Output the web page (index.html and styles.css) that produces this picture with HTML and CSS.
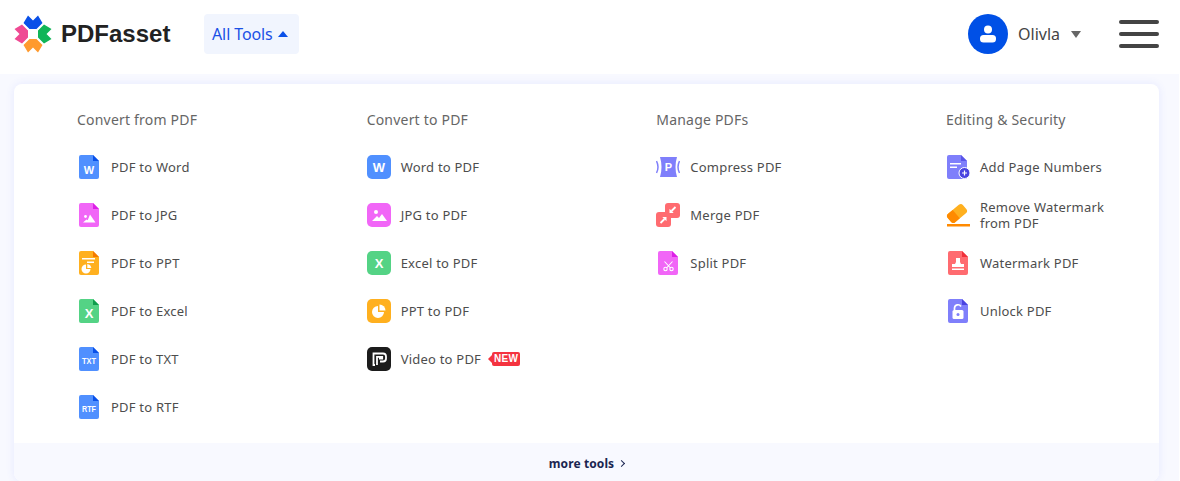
FILE: index.html
```html
<!DOCTYPE html>
<html>
<head>
    <meta charset="utf-8" />
    <title>PDFasset</title>
    <link rel="stylesheet" href="styles.css">
</head>
<body>
    <header class="top">
        <a class="logo">
            <svg width="38" height="38" viewBox="0 0 38 38">
                <polygon fill="#0a50e8" points="9.500,8 14,.5 19,5.500 24,.5 28.500,8 22.500,14 15.500,14"/>
                <polygon fill="#10b558" transform="rotate(90 19 19)" points="9.500,8 14,.5 19,5.500 24,.5 28.500,8 22.500,14 15.500,14"/>
                <polygon fill="#ff9a2e" transform="rotate(180 19 19)" points="9.500,8 14,.5 19,5.500 24,.5 28.500,8 22.500,14 15.500,14"/>
                <polygon fill="#ef4a93" transform="rotate(270 19 19)" points="9.500,8 14,.5 19,5.500 24,.5 28.500,8 22.500,14 15.500,14"/>
            </svg>
            <span>PDFasset</span>
        </a>
        <button class="all-tools">All Tools <i class="caret-up"></i></button>
        <div class="user">
            <span class="avatar">
                <svg width="20" height="20" viewBox="0 0 20 20" fill="#fff">
                    <circle cx="10" cy="5.500" r="4"/>
                    <rect x="2" y="11" width="16" height="7.500" rx="3.500"/>
                </svg>
            </span>
            <span class="name">Olivla</span>
            <i class="caret-down"></i>
        </div>
        <div class="burger"><i></i><i></i><i></i></div>
    </header>

    <main class="page">
        <section class="panel">
            <div class="cols">
                <div class="col">
                    <h3>Convert from PDF</h3>
                    <a class="tool">
                        <svg class="ico" width="24" height="24" viewBox="0 0 24 24"><path fill="#5090ff" d="M4 0h12l6 6v16a2 2 0 0 1-2 2H4a2 2 0 0 1-2-2V2a2 2 0 0 1 2-2z"/><path fill="#0a50e8" d="M16 0l6 6h-6z"/><text x="12" y="19" class="gl gl-m">W</text></svg>
                        PDF to Word
                    </a>
                    <a class="tool">
                        <svg class="ico" width="24" height="24" viewBox="0 0 24 24"><path fill="#f166f7" d="M4 0h12l6 6v16a2 2 0 0 1-2 2H4a2 2 0 0 1-2-2V2a2 2 0 0 1 2-2z"/><path fill="#dc1fe6" d="M16 0l6 6h-6z"/><circle cx="8.500" cy="13.500" r="1.400" fill="#fff"/><path fill="#fff" d="M6 19.500l3.500-3 1.200 .8L13 11.500l5.500 8z"/></svg>
                        PDF to JPG
                    </a>
                    <a class="tool">
                        <svg class="ico" width="24" height="24" viewBox="0 0 24 24"><path fill="#ffb01f" d="M4 0h12l6 6v16a2 2 0 0 1-2 2H4a2 2 0 0 1-2-2V2a2 2 0 0 1 2-2z"/><path fill="#f57a00" d="M16 0l6 6h-6z"/><rect x="5" y="7" width="13" height="1.500" fill="#fff"/><rect x="10" y="10.500" width="7" height="1.500" fill="#fff"/><path fill="#fff" d="M9 13.500v4.500h4.500a4.500 4.500 0 1 1-4.500-4.500z"/><path fill="#fff" d="M10.300 13a4.500 4.500 0 0 1 4 4h-4z"/></svg>
                        PDF to PPT
                    </a>
                    <a class="tool">
                        <svg class="ico" width="24" height="24" viewBox="0 0 24 24"><path fill="#54d385" d="M4 0h12l6 6v16a2 2 0 0 1-2 2H4a2 2 0 0 1-2-2V2a2 2 0 0 1 2-2z"/><path fill="#0f9d4c" d="M16 0l6 6h-6z"/><text x="12" y="19" class="gl gl-l">X</text></svg>
                        PDF to Excel
                    </a>
                    <a class="tool">
                        <svg class="ico" width="24" height="24" viewBox="0 0 24 24"><path fill="#5090ff" d="M4 0h12l6 6v16a2 2 0 0 1-2 2H4a2 2 0 0 1-2-2V2a2 2 0 0 1 2-2z"/><path fill="#0a50e8" d="M16 0l6 6h-6z"/><text x="12" y="17" class="gl gl-s" textLength="14" lengthAdjust="spacingAndGlyphs">TXT</text></svg>
                        PDF to TXT
                    </a>
                    <a class="tool">
                        <svg class="ico" width="24" height="24" viewBox="0 0 24 24"><path fill="#5090ff" d="M4 0h12l6 6v16a2 2 0 0 1-2 2H4a2 2 0 0 1-2-2V2a2 2 0 0 1 2-2z"/><path fill="#0a50e8" d="M16 0l6 6h-6z"/><text x="12" y="17" class="gl gl-s" textLength="14" lengthAdjust="spacingAndGlyphs">RTF</text></svg>
                        PDF to RTF
                    </a>
                </div>

                <div class="col">
                    <h3>Convert to PDF</h3>
                    <a class="tool">
                        <svg class="ico" width="24" height="24" viewBox="0 0 24 24"><rect width="24" height="24" rx="5" fill="#5090ff"/><text x="12" y="17" class="gl gl-l">W</text></svg>
                        Word to PDF
                    </a>
                    <a class="tool">
                        <svg class="ico" width="24" height="24" viewBox="0 0 24 24"><rect width="24" height="24" rx="5" fill="#f166f7"/><circle cx="9" cy="9" r="2" fill="#fff"/><path fill="#fff" d="M5 18l5-5 2 2 3-4 5 7z"/></svg>
                        JPG to PDF
                    </a>
                    <a class="tool">
                        <svg class="ico" width="24" height="24" viewBox="0 0 24 24"><rect width="24" height="24" rx="5" fill="#54d385"/><text x="12" y="17" class="gl gl-l">X</text></svg>
                        Excel to PDF
                    </a>
                    <a class="tool">
                        <svg class="ico" width="24" height="24" viewBox="0 0 24 24"><rect width="24" height="24" rx="5" fill="#ffb01f"/><path fill="#fff" d="M11 7v6h6a6 6 0 1 1-6-6z"/><path fill="#fff" d="M12.500 5.500a6 6 0 0 1 6 6h-6z"/></svg>
                        PPT to PDF
                    </a>
                    <a class="tool">
                        <svg class="ico" width="24" height="24" viewBox="0 0 24 24"><rect width="24" height="24" rx="5" fill="#1c1c1c"/><path fill="none" stroke="#fff" stroke-width="1.800" d="M8 18H6.500V6.500h9.500a3 3 0 0 1 3 3v2a3 3 0 0 1-3 3h-3"/><path fill="none" stroke="#fff" stroke-width="1.800" d="M10 18v-8.200h5.200v1.800H12"/></svg>
                        Video to PDF
                        <span class="new"><i></i><b>NEW</b></span>
                    </a>
                </div>

                <div class="col">
                    <h3>Manage PDFs</h3>
                    <a class="tool">
                        <svg class="ico" width="24" height="24" viewBox="0 0 24 24"><path fill="#7f7ffb" d="M4 2h17Q18 12 21 22H4Q7 12 4 2z"/><path fill="none" stroke="#7f7ffb" stroke-width="1.500" d="M.5 6Q3.500 12 .5 18M23.500 6Q20.500 12 23.500 18"/><text x="12.500" y="16" class="gl gl-m">P</text></svg>
                        Compress PDF
                    </a>
                    <a class="tool">
                        <svg class="ico" width="24" height="24" viewBox="0 0 24 24"><rect x="0" y="9" width="15" height="15" rx="3" fill="#ff6b70"/><rect x="9" y="0" width="15" height="15" rx="3" fill="#ff6b70"/><path fill="#fff" d="M10.500 14v4.200l-4.200-4.200zM13.500 10V5.800l4.200 4.200z"/><path stroke="#fff" stroke-width="1.800" d="M8.500 16L4.500 20M15.500 8L19.500 4"/></svg>
                        Merge PDF
                    </a>
                    <a class="tool">
                        <svg class="ico" width="24" height="24" viewBox="0 0 24 24"><path fill="#f166f7" d="M4 0h12l6 6v16a2 2 0 0 1-2 2H4a2 2 0 0 1-2-2V2a2 2 0 0 1 2-2z"/><path fill="#dc1fe6" d="M16 0l6 6h-6z"/><g fill="none" stroke="#fff" stroke-width="1.100"><path d="M8.500 10.500L14.500 17M16.500 10.500L10.500 17"/><circle cx="9.500" cy="18" r="1.700"/><circle cx="15.500" cy="18" r="1.700"/></g></svg>
                        Split PDF
                    </a>
                </div>

                <div class="col">
                    <h3>Editing &amp; Security</h3>
                    <a class="tool">
                        <svg class="ico" width="24" height="24" viewBox="0 0 24 24"><path fill="#7f7ffb" d="M3 0h12l6 6v16a2 2 0 0 1-2 2H3a2 2 0 0 1-2-2V2a2 2 0 0 1 2-2z"/><path fill="#5a55e8" d="M15 0l6 6h-6z"/><rect x="4" y="8" width="11" height="1.500" fill="#fff"/><rect x="4" y="11.500" width="7" height="1.500" fill="#fff"/><circle cx="18.500" cy="18" r="5.500" fill="#4a44e0" stroke="#fff" stroke-width="1"/><path stroke="#fff" stroke-width="1.200" d="M18.500 15.500v5M16 18h5"/></svg>
                        Add Page Numbers
                    </a>
                    <a class="tool">
                        <svg class="ico" width="24" height="24" viewBox="0 0 24 24"><g transform="rotate(-40 11 10.500)"><rect x="1" y="5" width="20" height="11" rx="3" fill="#ffb01f"/><path fill="#ff8a00" d="M4 5h6v11H4a3 3 0 0 1-3-3V8a3 3 0 0 1 3-3z"/></g><rect x="1" y="21" width="23" height="2.500" fill="#ff8a00"/></svg>
                        <span class="wrap">Remove Watermark from PDF</span>
                    </a>
                    <a class="tool">
                        <svg class="ico" width="24" height="24" viewBox="0 0 24 24"><path fill="#ff6b70" d="M4 0h12l6 6v16a2 2 0 0 1-2 2H4a2 2 0 0 1-2-2V2a2 2 0 0 1 2-2z"/><path fill="#f0303a" d="M16 0l6 6h-6z"/><path fill="#fff" d="M10 7h4v4l1 2h3v3H6v-3h3l1-2zM6 17.500h12V19H6z"/></svg>
                        Watermark PDF
                    </a>
                    <a class="tool">
                        <svg class="ico" width="24" height="24" viewBox="0 0 24 24"><path fill="#7f7ffb" d="M4 0h12l6 6v16a2 2 0 0 1-2 2H4a2 2 0 0 1-2-2V2a2 2 0 0 1 2-2z"/><path fill="#4a44e0" d="M16 0l6 6h-6z"/><path fill="none" stroke="#fff" stroke-width="1.700" d="M8.500 11V9a3.500 3.500 0 0 1 6.500-1.500"/><rect x="6.500" y="11" width="11" height="9" rx="1.500" fill="#fff"/><circle cx="12" cy="15.500" r="1.500" fill="#7f7ffb"/></svg>
                        Unlock PDF
                    </a>
                </div>
            </div>
            <div class="more"><b>more tools</b> <span class="chev"></span></div>
        </section>
    </main>
</body>
</html>
```

FILE: styles.css
```css
* {
    box-sizing: border-box;
}

html, body {
    margin: 0;
    height: 481px;
    overflow: hidden;
    background: #fff;
}

body {
    font-family: "Noto Sans", "Liberation Sans", sans-serif;
    font-size: 14px;
    color: #4d4d4d;
}

.top {
    display: flex;
    align-items: center;
    height: 74px;
    padding: 0 21px 6px 14px;
}

.logo {
    display: flex;
    align-items: center;
    gap: 9px;
    width: 190px;
}

.logo span {
    font-family: "Liberation Sans", sans-serif;
    font-weight: bold;
    font-size: 24px;
    color: #222;
}

.all-tools {
    display: flex;
    align-items: center;
    gap: 5px;
    width: 95px;
    height: 40px;
    padding: 0 8px;
    border: 0;
    border-radius: 4px;
    background: #f1f5fe;
    color: #1a50e6;
    font: 16px "Noto Sans", sans-serif;
    letter-spacing: -0.1px;
}

.caret-up {
    width: 0;
    height: 0;
    border-left: 5px solid transparent;
    border-right: 5px solid transparent;
    border-bottom: 6px solid #0a50e8;
}

.user {
    display: flex;
    align-items: center;
    margin-left: auto;
}

.avatar {
    display: flex;
    align-items: center;
    justify-content: center;
    width: 40px;
    height: 40px;
    border-radius: 50%;
    background: #0050e6;
}

.name {
    margin-left: 10px;
    font-size: 16px;
    color: #444;
}

.caret-down {
    margin-left: 11px;
    width: 0;
    height: 0;
    border-left: 5px solid transparent;
    border-right: 5px solid transparent;
    border-top: 7px solid #666;
}

.burger {
    display: flex;
    flex-direction: column;
    gap: 8px;
    width: 40px;
    margin-left: 38px;
}

.burger i {
    display: block;
    height: 4px;
    border-radius: 2px;
    background: #444;
}

.page {
    height: 407px;
    margin-right: 1px;
    padding: 10px 20px 0 14px;
    background: #f8f9ff;
}

.panel {
    width: 1145px;
    height: 397px;
    border-radius: 8px;
    background: #fff;
    box-shadow: 0 0 8px rgba(70, 90, 255, 0.1);
    overflow: hidden;
}

.cols {
    display: grid;
    grid-template-columns: repeat(4, 289.67px);
    height: 359px;
    padding: 25px 0 0 63px;
}

.col h3 {
    margin: 0;
    height: 20px;
    line-height: 22px;
    font-size: 14px;
    font-weight: normal;
    letter-spacing: 0.2px;
    color: #666;
}

.col h3 + .tool {
    margin-top: 14px;
}

.tool {
    display: flex;
    align-items: center;
    height: 48px;
    line-height: 16px;
    font-size: 13px;
    letter-spacing: 0.22px;
}

.ico {
    flex: none;
    margin-right: 10px;
}

.wrap {
    width: 130px;
}

.gl {
    fill: #fff;
    font-family: "Liberation Sans", sans-serif;
    font-weight: bold;
    text-anchor: middle;
    letter-spacing: 0;
}

.gl-s {
    font-size: 9.500px;
}

.gl-m {
    font-size: 11px;
}

.gl-l {
    font-size: 13px;
}

.new {
    display: flex;
    align-items: center;
    margin-left: 7px;
}

.new i {
    width: 0;
    height: 0;
    border-top: 4px solid transparent;
    border-bottom: 4px solid transparent;
    border-right: 4px solid #f4333f;
}

.new b {
    width: 28px;
    height: 14px;
    border-radius: 2px;
    background: #f4333f;
    color: #fff;
    font: bold 10px/14px "Liberation Sans", sans-serif;
    letter-spacing: 0.3px;
    text-align: center;
}

.more {
    display: flex;
    align-items: center;
    justify-content: center;
    gap: 5px;
    height: 38px;
    padding-top: 2px;
    background: #f8f9ff;
    color: #1a2550;
    font-size: 12px;
    letter-spacing: 0.1px;
}

.chev {
    width: 5px;
    height: 5px;
    border-top: 1px solid #1a2550;
    border-right: 1px solid #1a2550;
    transform: rotate(45deg);
}
```
